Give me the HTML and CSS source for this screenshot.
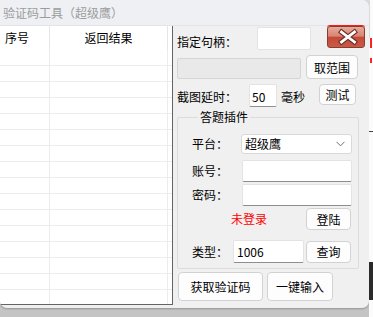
FILE: index.html
```html
<!DOCTYPE html>
<html lang="zh-CN">
<head>
  <meta charset="UTF-8" />
  <title>验证码工具</title>
  <link rel="stylesheet" href="styles.css">
</head>
<body>
  <div class="screen">
    <div class="stage">
      <div class="window">
        <div class="titlebar">验证码工具（超级鹰）</div>
        <div class="content">
          <div class="list">
            <div class="list-head">
              <div class="cell cell-no">序号</div>
              <div class="cell cell-res">返回结果</div>
              <div class="cell cell-pad"></div>
            </div>
            <div class="list-row"><div class="cell"></div><div class="cell"></div><div class="cell cell-pad"></div></div>
            <div class="list-row"><div class="cell"></div><div class="cell"></div><div class="cell cell-pad"></div></div>
            <div class="list-row"><div class="cell"></div><div class="cell"></div><div class="cell cell-pad"></div></div>
            <div class="list-row"><div class="cell"></div><div class="cell"></div><div class="cell cell-pad"></div></div>
            <div class="list-row"><div class="cell"></div><div class="cell"></div><div class="cell cell-pad"></div></div>
            <div class="list-row"><div class="cell"></div><div class="cell"></div><div class="cell cell-pad"></div></div>
            <div class="list-row"><div class="cell"></div><div class="cell"></div><div class="cell cell-pad"></div></div>
            <div class="list-row"><div class="cell"></div><div class="cell"></div><div class="cell cell-pad"></div></div>
            <div class="list-row"><div class="cell"></div><div class="cell"></div><div class="cell cell-pad"></div></div>
            <div class="list-row"><div class="cell"></div><div class="cell"></div><div class="cell cell-pad"></div></div>
            <div class="list-row"><div class="cell"></div><div class="cell"></div><div class="cell cell-pad"></div></div>
            <div class="list-row"><div class="cell"></div><div class="cell"></div><div class="cell cell-pad"></div></div>
            <div class="list-row"><div class="cell"></div><div class="cell"></div><div class="cell cell-pad"></div></div>
            <div class="list-row"><div class="cell"></div><div class="cell"></div><div class="cell cell-pad"></div></div>
            <div class="list-row"><div class="cell"></div><div class="cell"></div><div class="cell cell-pad"></div></div>
            <div class="list-row"><div class="cell"></div><div class="cell"></div><div class="cell cell-pad"></div></div>
          </div>

          <div class="panel">
            <div class="row row-handle">
              <span class="label label-handle">指定句柄：</span>
              <div class="textbox tb-handle"></div>
              <button class="close-btn" type="button">
                <svg width="38" height="22" viewBox="0 0 38 22">
                  <path d="M14.5 6 L27.5 16 M27.5 6 L14.5 16" stroke="#6b3028" stroke-width="5" stroke-linecap="square" fill="none"/>
                  <path d="M14.5 6 L27.5 16 M27.5 6 L14.5 16" stroke="#ffffff" stroke-width="2.8" stroke-linecap="square" fill="none"/>
                </svg>
              </button>
            </div>

            <div class="row row-range">
              <div class="range-box"></div>
              <button class="btn btn-range" type="button">取范围</button>
            </div>

            <div class="row row-delay">
              <span class="label label-delay">截图延时：</span>
              <div class="textbox tb-delay">50</div>
              <span class="unit">毫秒</span>
              <button class="btn btn-test" type="button">测试</button>
            </div>

            <fieldset class="group">
              <legend>答题插件</legend>
              <div class="grow grow-platform">
                <span class="glabel">平台：</span>
                <div class="select">
                  <span>超级鹰</span>
                  <svg width="9" height="6" viewBox="0 0 9 6"><polyline points="0.5,0.8 4.5,4.8 8.5,0.8" fill="none" stroke="#6d6d6d" stroke-width="1"/></svg>
                </div>
              </div>
              <div class="grow grow-account">
                <span class="glabel">账号：</span>
                <div class="textbox tb-wide"></div>
              </div>
              <div class="grow grow-password">
                <span class="glabel">密码：</span>
                <div class="textbox tb-wide"></div>
              </div>
              <div class="grow grow-status">
                <span class="status">未登录</span>
                <button class="btn btn-small" type="button">登陆</button>
              </div>
              <div class="grow grow-type">
                <span class="glabel glabel-type">类型：</span>
                <div class="textbox tb-type">1006</div>
                <button class="btn btn-small btn-query" type="button">查询</button>
              </div>
            </fieldset>

            <div class="row row-actions">
              <button class="btn btn-fetch" type="button">获取验证码</button>
              <button class="btn btn-input" type="button">一键输入</button>
            </div>
          </div>
        </div>
      </div>
      <div class="shade"></div>
    </div>

    <div class="behind">
      <div class="behind-top"></div>
      <div class="red-mark mark-a"></div>
      <div class="red-mark mark-b"></div>
      <div class="behind-line"></div>
      <div class="behind-dark"></div>
    </div>
  </div>
</body>
</html>
```

FILE: styles.css
```css
* {
  box-sizing: border-box;
  margin: 0;
  padding: 0;
}

body {
  width: 373px;
  height: 317px;
  overflow: hidden;
  font-family: "Noto Sans CJK SC", "Noto Sans", sans-serif;
  font-size: 12px;
  line-height: 16px;
  color: #000;
  background: #d4d4d4;
}

.screen {
  display: flex;
  width: 373px;
  height: 317px;
}

.stage {
  width: 369px;
  display: flex;
  flex-direction: column;
  background: linear-gradient(#dcdcdc, #c4c4c4);
}

.window {
  height: 308px;
  background: #f0f0f0;
  border-radius: 0 7px 7px 7px;
  overflow: hidden;
  box-shadow: 0 1px 2px rgba(0, 0, 0, 0.25);
}

.shade {
  flex: 1;
}

.titlebar {
  height: 26px;
  padding-left: 3px;
  line-height: 26px;
  color: #9c9c9c;
  background: #eef0f4;
  border-bottom: 1px solid #e2e4e8;
}

.content {
  display: flex;
}

/* result list */
.list {
  width: 173px;
  height: 279px;
  background: #fff;
  border-right: 1px solid #646464;
  border-bottom: 1px solid #646464;
  overflow: hidden;
}

.list-head,
.list-row {
  display: grid;
  grid-template-columns: 50px 118px 1fr;
}

.list-head {
  height: 24px;
}

.list-row {
  height: 16px;
  border-bottom: 1px solid #ededed;
}

.cell {
  border-right: 1px solid #ececec;
}

.cell-pad {
  border-right: none;
}

.list-head .cell {
  line-height: 24px;
  border-right-color: #e6e6e6;
}

.cell-no {
  padding-left: 5px;
}

.cell-res {
  text-align: center;
}

/* right panel */
.panel {
  width: 196px;
  padding-left: 4px;
}

.row {
  display: flex;
  align-items: flex-start;
}

.label {
  line-height: 16px;
}

.row-handle {
  height: 24px;
}

.label-handle {
  width: 80px;
  margin-top: 8px;
}

.textbox {
  height: 23px;
  padding-left: 4px;
  line-height: 22px;
  background: #fff;
  border: 1px solid #e3e3e3;
  border-bottom-color: #8e8e8e;
  border-radius: 2px;
}

.tb-handle {
  width: 54px;
  margin-top: 1px;
  border-bottom-color: #e3e3e3;
}

.close-btn {
  width: 38px;
  height: 22px;
  margin-left: 16px;
  border: 1px solid #8c3b30;
  border-radius: 3px;
  background: linear-gradient(#e6aa9b 0%, #da8573 45%, #c5493a 52%, #c95a44 100%);
  box-shadow: 0 -1px 0 #ff1a1a;
}

.close-btn svg {
  display: block;
  margin: -1px 0 0 -1px;
}

.btn {
  height: 24px;
  font-family: inherit;
  font-size: 12px;
  color: #000;
  background: #fdfdfd;
  border: 1px solid #d2d2d2;
  border-radius: 4px;
}

.row-range {
  margin-top: 5px;
  height: 24px;
}

.range-box {
  width: 124px;
  height: 21px;
  margin-top: 3px;
  background: #e9e9e9;
  border: 1px solid #d5d5d5;
  border-radius: 2px;
}

.btn-range {
  width: 52px;
  margin-left: 5px;
}

.row-delay {
  margin-top: 5px;
  height: 23px;
}

.label-delay {
  width: 72px;
  margin-top: 5px;
}

.tb-delay {
  width: 28px;
  padding-left: 2px;
  line-height: 23px;
}

.unit {
  width: 38px;
  margin-left: 4px;
  margin-top: 5px;
}

.btn-test {
  width: 37px;
  height: 21px;
}

/* plugin group */
.group {
  width: 182px;
  height: 159px;
  margin-top: 3px;
  padding: 0 0 0 14px;
  border: 1px solid #dcdcdc;
  border-radius: 2px;
}

.group legend {
  margin-left: 6px;
  padding: 0 2px;
  line-height: 14px;
}

.grow {
  display: flex;
  align-items: center;
}

.glabel {
  width: 49px;
}

.grow-platform {
  margin-top: 10px;
}

.select {
  width: 111px;
  height: 20px;
  padding: 0 6px 0 3px;
  display: flex;
  align-items: center;
  justify-content: space-between;
  background: #fff;
  border: 1px solid #d9d9d9;
  border-radius: 3px;
}

.tb-wide {
  width: 110px;
  height: 22px;
  margin-left: 1px;
}

.grow-account {
  margin-top: 6px;
}

.grow-password {
  margin-top: 2px;
}

.grow-status {
  margin-top: 2px;
}

.status {
  width: 75px;
  margin-left: 39px;
  color: #ff0000;
}

.btn-small {
  width: 45px;
  height: 22px;
}

.grow-type {
  margin-top: 10px;
}

.glabel-type {
  width: 41px;
}

.tb-type {
  width: 71px;
  padding-left: 3px;
}

.btn-query {
  margin-left: 2px;
}

.row-actions {
  margin-top: 3px;
}

.btn-fetch {
  width: 85px;
  height: 29px;
  margin-left: 1px;
}

.btn-input {
  width: 66px;
  height: 29px;
  margin-left: 4px;
}

/* window behind, peeking out on the right */
.behind {
  flex: 1;
  display: flex;
  flex-direction: column;
  background: #fbfbfb;
}

.behind-top {
  height: 38px;
  border-left: 1px solid #dadada;
}

.red-mark {
  width: 2px;
  margin-left: 1px;
  background: #f22;
}

.mark-a {
  height: 10px;
}

.mark-b {
  height: 5px;
  margin-top: 10px;
}

.behind-line {
  height: 1px;
  margin-top: 68px;
  background: #444;
}

.behind-dark {
  height: 38px;
  margin-top: 130px;
  background: #2a2a2a;
}
```
